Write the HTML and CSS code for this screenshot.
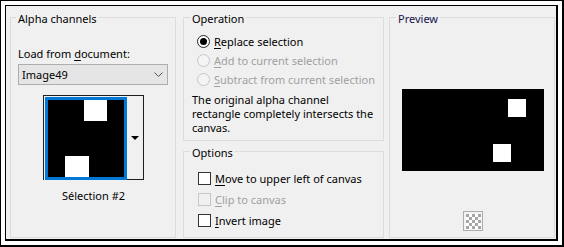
FILE: index.html
```html
<!DOCTYPE html>
<html lang="en">

<head>
  <meta charset="UTF-8">
  <title>Alpha channels</title>
  <link rel="stylesheet" href="styles.css">
</head>

<body>
  <div class="frame">
    <div class="dialog">
      <section class="group group-alpha">
        <div class="group-title">Alpha channels</div>
        <div class="field-label">Load from <u>d</u>ocument:</div>
        <div class="combo">
          <span>Image49</span>
          <svg class="chevron" width="9" height="5" viewBox="0 0 9 5">
            <polyline points="0.5,0.5 4.5,4.5 8.5,0.5" fill="none" stroke="#555" stroke-width="1" />
          </svg>
        </div>
        <div class="thumb">
          <div class="thumb-img">
            <svg width="76" height="77" viewBox="0 0 76 77">
              <rect width="76" height="77" fill="#000" />
              <rect x="36" y="0" width="23" height="21" fill="#fff" />
              <rect x="17" y="56" width="24" height="21" fill="#fff" />
            </svg>
          </div>
          <div class="thumb-btn"><span class="tri"></span></div>
        </div>
        <div class="thumb-caption">Sélection #2</div>
      </section>

      <div class="col-mid">
        <section class="group group-op">
          <div class="group-title">Operation</div>
          <div class="option-row"><span class="radio checked"></span><span><u>R</u>eplace selection</span></div>
          <div class="option-row disabled"><span class="radio"></span><span><u>A</u>dd to current selection</span></div>
          <div class="option-row disabled"><span class="radio"></span><span><u>S</u>ubtract from current selection</span></div>
          <p class="note">The original alpha channel<br>rectangle completely intersects the<br>canvas.</p>
        </section>

        <section class="group group-opt">
          <div class="group-title">Options</div>
          <div class="check-row"><span class="check"></span><span><u>M</u>ove to upper left of canvas</span></div>
          <div class="check-row disabled"><span class="check"></span><span><u>C</u>lip to canvas</span></div>
          <div class="check-row"><span class="check"></span><span><u>I</u>nvert image</span></div>
        </section>
      </div>

      <section class="group group-preview">
        <div class="group-title">Preview</div>
        <svg class="preview-img" width="142" height="82" viewBox="0 0 142 82">
          <rect width="142" height="82" fill="#000" />
          <rect x="106" y="10" width="18" height="18" fill="#fff" />
          <rect x="91" y="55" width="18" height="18" fill="#fff" />
        </svg>
        <div class="checker-btn">
          <svg width="20" height="20" viewBox="0 0 20 20">
            <rect x="0.5" y="0.5" width="19" height="19" fill="#f4f4f4" stroke="#adadad" />
            <rect x="3" y="3" width="15" height="15" fill="#fff" />
            <g fill="#a6a6a6">
              <rect x="3" y="3" width="3" height="3" />
              <rect x="9" y="3" width="3" height="3" />
              <rect x="15" y="3" width="3" height="3" />
              <rect x="6" y="6" width="3" height="3" />
              <rect x="12" y="6" width="3" height="3" />
              <rect x="3" y="9" width="3" height="3" />
              <rect x="9" y="9" width="3" height="3" />
              <rect x="15" y="9" width="3" height="3" />
              <rect x="6" y="12" width="3" height="3" />
              <rect x="12" y="12" width="3" height="3" />
              <rect x="3" y="15" width="3" height="3" />
              <rect x="9" y="15" width="3" height="3" />
              <rect x="15" y="15" width="3" height="3" />
            </g>
          </svg>
        </div>
      </section>
    </div>
  </div>
</body>

</html>
```

FILE: styles.css
```css
* {
  margin: 0;
  padding: 0;
  box-sizing: border-box;
}

html,
body {
  width: 564px;
  height: 247px;
  overflow: hidden;
}

body {
  background: #fff;
  color: #000;
  font-family: 'Noto Sans', 'Open Sans', sans-serif;
  font-size: 11px;
  line-height: 15px;
}

u {
  text-decoration-thickness: 1px;
  text-underline-offset: 2px;
}

/* outer white frame with the black edges */
.frame {
  width: 564px;
  height: 247px;
  border: 1px solid #000;
  border-right-width: 2px;
  border-bottom-width: 2px;
  padding: 4px;
}

.dialog {
  height: 100%;
  background: #f0f0f0;
  border: 1px solid #000;
  border-right-width: 2px;
  border-bottom-width: 2px;
  padding: 11px 1px 1px 4px;
  display: flex;
  gap: 7px;
}

/* group box: the title sits on the top line */
.group {
  border: 1px solid #dcdcdc;
  padding: 0 7px;
}

.group-title {
  width: fit-content;
  line-height: 16px;
  margin: -7px 0 0 -2px;
  padding: 0 2px;
  background: #f0f0f0;
}

/* left column */
.group-alpha {
  width: 166px;
}

.field-label {
  margin-top: 19px;
}

.combo {
  margin-top: 3px;
  height: 21px;
  background: #e5e5e5;
  border: 1px solid #adadad;
  display: flex;
  align-items: center;
  justify-content: space-between;
  padding: 0 4px 0 3px;
}

.thumb {
  margin: 10px auto 0;
  width: 101px;
  display: flex;
  border-top: 1px solid #1e1e1e;
  border-left: 1px solid #1e1e1e;
  padding: 1px 0 0 1px;
}

.thumb-img {
  border: 3px solid #0078d7;
  display: flex;
}

.thumb-btn {
  flex: 1;
  border-right: 1px solid #1e1e1e;
  border-bottom: 1px solid #1e1e1e;
  margin-top: -1px;
  display: flex;
  align-items: center;
  justify-content: center;
  padding-left: 1px;
}

.tri {
  width: 0;
  height: 0;
  border-left: 4px solid transparent;
  border-right: 4px solid transparent;
  border-top: 4px solid #000;
}

.thumb-caption {
  margin-top: 8px;
  text-align: center;
  padding-left: 1px;
}

/* middle column */
.col-mid {
  width: 201px;
  display: flex;
  flex-direction: column;
  gap: 10px;
  margin-right: -2px;
}

.group-op {
  height: 124px;
  padding-left: 8px;
}

.group-opt {
  flex: 1;
  padding-left: 8px;
}

.option-row,
.check-row {
  display: flex;
  align-items: center;
  line-height: 19px;
  padding-left: 5px;
}

.group-op .group-title + .option-row {
  margin-top: 5px;
}

.check-row {
  line-height: 21px;
  padding-left: 6px;
}

.group-opt .group-title + .check-row {
  margin-top: 7px;
}

.disabled {
  color: #a0a0a0;
}

.radio {
  width: 13px;
  height: 13px;
  border: 1px solid #222;
  border-radius: 50%;
  background: #fff;
  margin-right: 4px;
  display: flex;
  align-items: center;
  justify-content: center;
}

.radio.checked::after {
  content: "";
  width: 7px;
  height: 7px;
  border-radius: 50%;
  background: #000;
}

.disabled .radio {
  border-color: #c6c6c6;
  background: #f4f4f4;
}

.check {
  width: 13px;
  height: 13px;
  border: 1px solid #333;
  background: #fff;
  margin-right: 4px;
}

.disabled .check {
  border-color: #c6c6c6;
  background: #f0f0f0;
}

.note {
  margin-top: 4px;
  line-height: 14px;
}

/* right column */
.group-preview {
  width: 166px;
  padding-left: 8px;
  display: flex;
  flex-direction: column;
  align-items: center;
}

.group-preview .group-title {
  align-self: flex-start;
  color: #14144a;
}

.preview-img {
  display: block;
  margin-top: 62px;
}

.checker-btn {
  margin-top: 40px;
  display: flex;
}
```
